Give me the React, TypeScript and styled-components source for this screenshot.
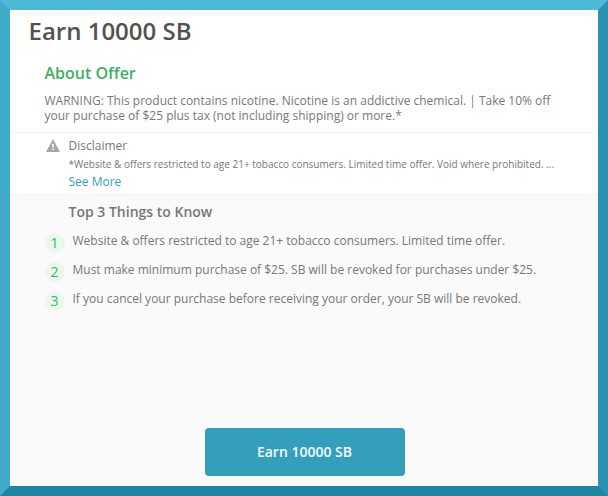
import React from 'react';
import styled, { createGlobalStyle } from 'styled-components';

const GlobalStyle = createGlobalStyle`
  * { box-sizing: border-box; }
  body { margin: 0; overflow: hidden; font-family: "Open Sans", "Noto Sans", sans-serif; color: #777; }
  h1, h2, h3, p, ol { margin: 0; padding: 0; }
`;

const Frame = styled.main`
  display: flex;
  flex-direction: column;
  width: 608px;
  height: 496px;
  border: 10px solid;
  border-color: #4db9d6 #2893b0 #1b87a3 #40abc8;
  background: #fff;
`;

const Title = styled.h1`
  height: 44px;
  padding-left: 18.5px;
  font-size: 24px;
  line-height: 42px;
  font-weight: 600;
  color: #525252;
`;

const About = styled.section`
  height: 78px;
  padding: 7px 30px 0 34.5px;
  white-space: nowrap;
`;

const AboutTitle = styled.h2`
  font-size: 16px;
  line-height: 24px;
  font-weight: 600;
  color: #3db065;
`;

const AboutText = styled.div`
  display: grid;
  grid-auto-rows: 15px;
  margin-top: 8px;
  font-size: 12px;
  line-height: 15px;
`;

const Disclaimer = styled.section`
  display: flex;
  gap: 8.5px;
  height: 62px;
  padding: 5px 35px 0 36px;
  border-top: 1px solid #f3f3f3;
  svg { flex: none; margin-top: 1px; }
`;

const DisclaimerBody = styled.div`
  white-space: nowrap;
  font-size: 12px;
  line-height: 16px;
`;

const SmallPrint = styled.p`
  margin: 2px 0;
  font-size: 10px;
  line-height: 16px;
`;

const SeeMore = styled.a`
  display: block;
  color: #349fbb;
`;

const Facts = styled.section`
  display: flex;
  flex-direction: column;
  flex: 1;
  padding: 7px 33px 10px 35px;
  border-top: 1px solid #f3f3f3;
  background: #fafafa;
`;

const FactsTitle = styled.h3`
  margin-left: 23.5px;
  font-size: 14px;
  line-height: 20px;
  font-weight: 600;
`;

const FactList = styled.ol`
  display: grid;
  gap: 9px;
  margin-top: 9px;
  list-style: none;
`;

const Fact = styled.li`
  display: flex;
  gap: 7.5px;
  height: 20px;
  font-size: 12px;
  line-height: 20px;
  white-space: nowrap;
`;

const Badge = styled.span`
  width: 20px;
  height: 20px;
  margin-top: 2px;
  padding-right: 1px;
  border-radius: 50%;
  background: #eaf7ee;
  color: #40b267;
  font-size: 14px;
  text-align: center;
`;

const EarnButton = styled.button`
  align-self: center;
  width: 200px;
  height: 48px;
  margin-top: auto;
  padding: 0 1px 2px 0;
  border: 0;
  border-radius: 4px;
  background: #349fbb;
  color: #f3fafc;
  font: 600 14px "Open Sans", sans-serif;
`;

const facts = [
  'Website & offers restricted to age 21+ tobacco consumers. Limited time offer.',
  'Must make minimum purchase of $25. SB will be revoked for purchases under $25.',
  'If you cancel your purchase before receiving your order, your SB will be revoked.',
];

export default function App() {
  return (
    <>
      <GlobalStyle />
      <Frame>
        <Title>Earn 10000 SB</Title>
        <About>
          <AboutTitle>About Offer</AboutTitle>
          <AboutText>
            <p>WARNING: This product contains nicotine. Nicotine is an addictive chemical. | Take 10% off</p>
            <p>your purchase of $25 plus tax (not including shipping) or more.*</p>
          </AboutText>
        </About>
        <Disclaimer>
          <svg width="14" height="13" viewBox="0 0 14 13">
            <path d="M7 0 14 13H0Z" fill="#a6a6a6" />
            <path d="M6.2 4.8h1.6v3.4H6.2zM6.2 9.4h1.6v1.5H6.2z" fill="#fff" />
          </svg>
          <DisclaimerBody>
            <div>Disclaimer</div>
            <SmallPrint>
              *Website & offers restricted to age 21+ tobacco consumers. Limited time offer. Void where prohibited. ...
            </SmallPrint>
            <SeeMore>See More</SeeMore>
          </DisclaimerBody>
        </Disclaimer>
        <Facts>
          <FactsTitle>Top 3 Things to Know</FactsTitle>
          <FactList>
            {facts.map((fact, i) => (
              <Fact key={fact}>
                <Badge>{i + 1}</Badge>
                <span>{fact}</span>
              </Fact>
            ))}
          </FactList>
          <EarnButton>Earn 10000 SB</EarnButton>
        </Facts>
      </Frame>
    </>
  );
}
